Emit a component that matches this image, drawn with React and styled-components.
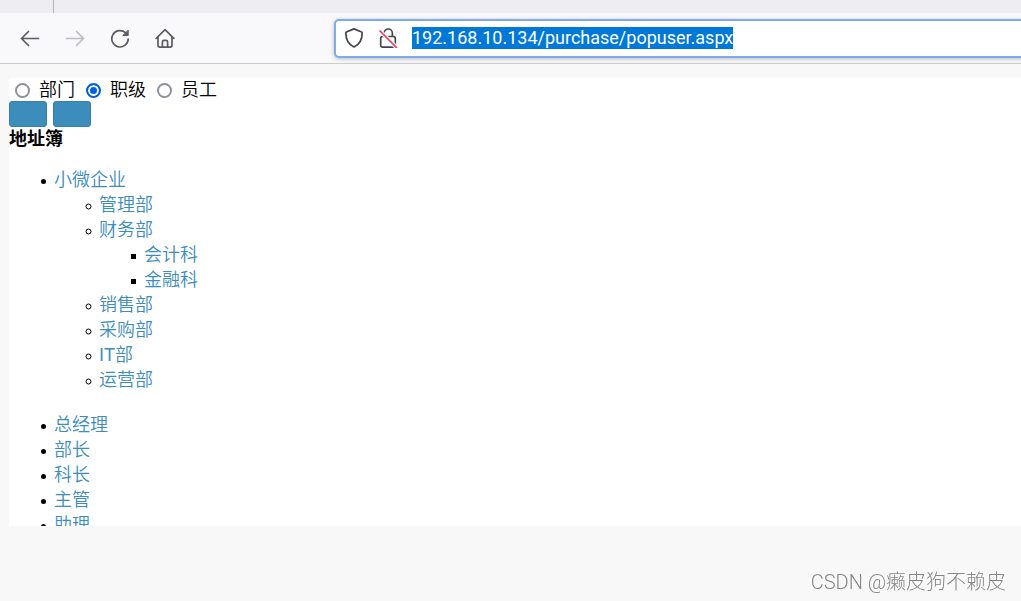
import { useEffect, useRef, useState } from "react";
import styled, { createGlobalStyle } from "styled-components";

const GlobalStyle = createGlobalStyle`
  * {
    box-sizing: border-box;
  }

  body {
    margin: 0;
    background: #f8f8f8;
    color: #000;
    font-family: "Liberation Sans", "Noto Sans CJK SC", sans-serif;
    font-size: 18px;
    font-weight: 350;
    line-height: 25px;
  }
`;

const Page = styled.div`
  display: flex;
  flex-direction: column;
  height: 100vh;
  overflow: clip;
`;

// browser chrome
const TabStrip = styled.div`
  flex: none;
  height: 13px;
  background: #eeeef2;
`;

const TabEdge = styled.div`
  width: 54px;
  height: 100%;
  border-right: 1px solid #b4b4bb;
`;

const Toolbar = styled.header`
  display: flex;
  flex: none;
  align-items: center;
  height: 51px;
  padding-left: 12px;
  overflow: clip;
  background: #f9f9fb;
  border-bottom: 1px solid #cccccf;
`;

const NavButtons = styled.nav`
  display: flex;
  flex: none;
  gap: 9px;
  margin-right: 151px;
`;

const NavButton = styled.button`
  display: flex;
  align-items: center;
  justify-content: center;
  width: 36px;
  height: 36px;
  padding: 0;
  border: 0;
  background: none;
  color: #5b5b66;

  &:disabled {
    color: #bdbdc2;
  }
`;

const Icon = styled.svg`
  display: block;
  flex: none;
  fill: none;
  stroke: currentColor;
  stroke-width: 1.7;
  stroke-linecap: round;
  stroke-linejoin: round;
`;

const AddressBar = styled.div`
  display: flex;
  flex: 1;
  align-items: center;
  gap: 14px;
  height: 39px;
  margin-right: -8px;
  padding-left: 8px;
  border: 2px solid #7dabec;
  border-radius: 5px;
  background: #fff;
  color: #45454e;
  box-shadow: 0 1px 4px rgba(0, 0, 0, 0.25);
`;

const AddressInput = styled.input`
  flex: 1;
  min-width: 0;
  height: 22px;
  padding: 0;
  border: 0;
  outline: 0;
  background: none;
  color: #15141a;
  font-family: Roboto, sans-serif;
  font-size: 18px;
  line-height: 22px;

  &::selection {
    background: #0078d7;
    color: #fff;
  }
`;

// page content
const Content = styled.main`
  flex: 1;
  min-height: 0;
  margin: 14px 0 75px 9px;
  overflow: hidden;
  background: #fff;
`;

const RadioRow = styled.div`
  display: flex;
  gap: 11px;
  height: 23px;
  padding: 2px 0 0 6px;
`;

const RadioLabel = styled.label`
  display: flex;
  align-items: center;
  gap: 9px;
`;

const Radio = styled.input`
  appearance: none;
  width: 15px;
  height: 15px;
  margin: 0;
  border: 2px solid #8f8f9d;
  border-radius: 50%;
  background: #fff;

  &:checked {
    border-color: #0061e0;
    background: #0061e0;
    box-shadow: inset 0 0 0 2px #fff;
  }
`;

const ButtonRow = styled.div`
  display: flex;
  gap: 6px;
`;

const BlueButton = styled.button`
  width: 38px;
  height: 26px;
  padding: 0;
  border: 1px solid #367fa9;
  border-radius: 3px;
  background: #3c8dbc;
`;

const Title = styled.h1`
  margin: 0 0 16px;
  font-size: 18px;
  font-weight: 700;
  line-height: 25px;
`;

const Tree = styled.ul`
  margin: 0 0 20px;
  padding-left: 49px;
  list-style: disc;

  & & {
    margin: 0;
    padding-left: 45px;
    list-style: circle;
  }

  & & & {
    list-style: square;
  }
`;

// pulled towards the bullet
const TreeLink = styled.a`
  margin-left: -4px;
  color: #3c8dbc;
  text-decoration: none;
`;

const Watermark = styled.div`
  position: fixed;
  right: 15px;
  bottom: 6px;
  color: #858585;
  font-family: Roboto, "Noto Sans CJK SC", sans-serif;
  font-size: 20px;
  font-weight: 300;
  text-shadow: -1px -1px 0 #fff;
`;

const departments = [
  {
    name: "小微企业",
    children: [
      { name: "管理部" },
      { name: "财务部", children: [{ name: "会计科" }, { name: "金融科" }] },
      { name: "销售部" },
      { name: "采购部" },
      { name: "IT部" },
      { name: "运营部" },
    ],
  },
];

const positions = [
  { name: "总经理" },
  { name: "部长" },
  { name: "科长" },
  { name: "主管" },
  { name: "助理" },
];

const modes = ["部门", "职级", "员工"];

function TreeList({ items }) {
  return (
    <Tree>
      {items.map((item) => (
        <li key={item.name}>
          <TreeLink href="#">{item.name}</TreeLink>
          {item.children && <TreeList items={item.children} />}
        </li>
      ))}
    </Tree>
  );
}

function BrowserBar() {
  const address = useRef(null);

  useEffect(() => {
    address.current.focus({ preventScroll: true });
    address.current.select();
  }, []);

  return (
    <>
      <TabStrip>
        <TabEdge />
      </TabStrip>
      <Toolbar>
        <NavButtons>
          <NavButton aria-label="后退">
            <Icon width="20" height="20" viewBox="0 0 20 20">
              <path d="M18.5 10.5h-17M8.5 3.5l-7 7 7 7" />
            </Icon>
          </NavButton>
          <NavButton aria-label="前进" disabled>
            <Icon width="20" height="20" viewBox="0 0 20 20">
              <path d="M1.5 10.5h17M11.5 3.5l7 7-7 7" />
            </Icon>
          </NavButton>
          <NavButton aria-label="刷新">
            <Icon width="20" height="20" viewBox="0 0 20 20">
              <path d="M18.2 11A8.2 8.2 0 1 1 15.5 4.7" />
              <path d="M18.2 2.5v5h-5z" fill="currentColor" strokeWidth="1" />
            </Icon>
          </NavButton>
          <NavButton aria-label="主页">
            <Icon width="20" height="20" viewBox="0 0 20 20">
              <path d="M1.2 10.3L10 1.7l8.8 8.6M3 8.9v8.4a1.8 1.8 0 0 0 1.8 1.8h10.4a1.8 1.8 0 0 0 1.8-1.8V8.9" />
              <path d="M7.4 18.9v-5a1.6 1.6 0 0 1 1.6-1.6h2a1.6 1.6 0 0 1 1.6 1.6v5" />
            </Icon>
          </NavButton>
        </NavButtons>
        <AddressBar>
          <Icon width="20" height="20" viewBox="0 0 20 20">
            <path d="M10 .9L17.6 4a1 1 0 0 1 .6 1c0 6-2.6 11.4-8.2 14.1C4.4 16.4 1.8 11 1.8 5a1 1 0 0 1 .6-1z" />
          </Icon>
          <Icon width="20" height="20" viewBox="0 0 20 20">
            <path d="M6 8.5V5.2a4.2 4.2 0 0 1 8.4 0v3.3M4.5 8.5h11a1.8 1.8 0 0 1 1.8 1.8v7a1.8 1.8 0 0 1-1.8 1.8h-11a1.8 1.8 0 0 1-1.8-1.8v-7a1.8 1.8 0 0 1 1.8-1.8z" />
            <path d="M2.5 3.5l16 16" stroke="#fff" strokeWidth="4" />
            <path d="M2 3l16.5 16.5" stroke="#f03a5f" />
          </Icon>
          <AddressInput
            ref={address}
            type="text"
            aria-label="地址"
            spellCheck={false}
            defaultValue="192.168.10.134/purchase/popuser.aspx"
          />
        </AddressBar>
      </Toolbar>
    </>
  );
}

export default function App() {
  const [mode, setMode] = useState("职级");

  return (
    <Page>
      <GlobalStyle />
      <BrowserBar />
      <Content>
        <RadioRow>
          {modes.map((name) => (
            <RadioLabel key={name}>
              <Radio
                type="radio"
                name="mode"
                checked={mode === name}
                onChange={() => setMode(name)}
              />
              {name}
            </RadioLabel>
          ))}
        </RadioRow>
        <ButtonRow>
          <BlueButton aria-label="确定" />
          <BlueButton aria-label="取消" />
        </ButtonRow>
        <Title>地址簿</Title>
        <TreeList items={departments} />
        <TreeList items={positions} />
      </Content>
      <Watermark>CSDN @癞皮狗不赖皮</Watermark>
    </Page>
  );
}
